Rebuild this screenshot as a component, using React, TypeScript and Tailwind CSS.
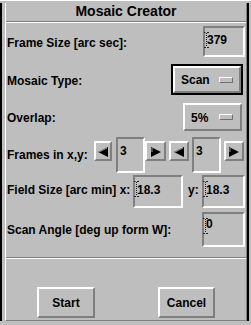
import React from "react";

const raised = "border-2 border-t-white border-l-white border-b-[#7f7f7f] border-r-[#7f7f7f]";
const sunken = "border-2 border-t-[#7f7f7f] border-l-[#7f7f7f] border-b-white border-r-white";

function Caret() {
  return (
    <svg width="5" height="16" viewBox="0 0 5 16" className="absolute left-[-1px] top-[4px]">
      <path d="M0 0.5h1.5M3 0.5h2M0 15.5h2M3 15.5h2" stroke="#222" strokeWidth="1" />
      <path d="M2.5 1v14" stroke="#222" strokeWidth="1" strokeDasharray="1 1" />
    </svg>
  );
}

function Field({ value, w, h, caret, pt = "pt-[5px]", extra = "" }: { value: string; w: string; h: string; caret?: boolean; pt?: string; extra?: string }) {
  return (
    <div className={`relative ${sunken} ${w} ${h} ${pt} pl-[1px] ${extra}`}>
      {caret && <Caret />}
      <span className="pl-[1px]">{value}</span>
    </div>
  );
}

function Indicator() {
  return <div className="w-[14px] h-[6px] border border-t-white border-l-white border-b-[#6f6f6f] border-r-[#6f6f6f]" />;
}

function Arrow({ dir, w }: { dir: "left" | "right"; w: string }) {
  return (
    <div className={`${raised} ${w} h-[20px] mt-[4px] flex items-center justify-center pt-[2px]`}>
      <svg width="10" height="10" viewBox="0 0 10 10">
        {dir === "left" ? (
          <>
            <polygon points="0,5 10,0 10,10" fill="#000" />
            <path d="M1 5L9 1" stroke="#9a9a9a" strokeWidth="1" />
          </>
        ) : (
          <>
            <polygon points="10,5 0,0 0,10" fill="#000" />
            <path d="M1 1L1 5" stroke="#9a9a9a" strokeWidth="1" />
          </>
        )}
      </svg>
    </div>
  );
}

export default function App() {
  return (
    <div className="w-[251px] h-[325px] bg-[#bebebe] border-t border-t-white flex flex-col font-['Liberation_Sans',Arial,sans-serif] font-bold text-[12px] leading-[14px] text-black">
      <div className="flex-1 mt-[2px] mb-[4px] mr-[2px] flex border-l-2 border-r-2 border-black">
        <div className="flex-1 ml-[3px] flex flex-col border-l border-l-white border-r border-r-[#7f7f7f] border-b border-b-[#7f7f7f]">
          <div className="h-[18px] text-center text-[14px] leading-[16px]">Mosaic Creator</div>
          <div className="h-[2px] border-t border-t-[#7f7f7f] border-b border-b-white" />

          <div className="mt-[3px] h-[31px] flex items-center pl-[1px] pr-[1px]">
            <span className="pt-[3px]">Frame Size [arc sec]:</span>
            <Field value="379" w="w-[42px]" h="h-[31px]" caret extra="ml-auto" />
          </div>

          <div className="mt-[7px] h-[31px] flex items-center pl-[1px] pr-[3px]">
            <span className="pt-[2px]">Mosaic Type:</span>
            <div className="ml-auto w-[72px] h-[31px] border-2 border-black">
              <div className={`${raised} h-full flex items-center justify-between pl-[6px] pr-[6px]`}>
                <span>Scan</span>
                <Indicator />
              </div>
            </div>
          </div>

          <div className="mt-[8px] h-[28px] flex items-center pl-[1px] pr-[4px]">
            <span className="pt-[2px]">Overlap:</span>
            <div className={`ml-auto w-[59px] h-[28px] ${raised} flex items-center justify-between pl-[6px] pr-[7px]`}>
              <span className="pt-[2px]">5%</span>
              <Indicator />
            </div>
          </div>

          <div className="mt-[6px] h-[36px] flex items-start pl-[1px]">
            <span className="w-[87px] self-center">Frames in x,y:</span>
            <Arrow dir="left" w="w-[18px]" />
            <Field value="3" w="w-[29px]" h="h-[36px]" extra="ml-[4px]" />
            <Arrow dir="right" w="w-[21px]" />
            <div className="ml-[3px]" />
            <Arrow dir="left" w="w-[20px]" />
            <Field value="3" w="w-[29px]" h="h-[36px]" extra="ml-[3px]" />
            <div className="ml-[3px]" />
            <Arrow dir="right" w="w-[20px]" />
          </div>

          <div className="mt-[2px] h-[33px] flex items-center pl-[1px] pr-[1px]">
            <span className="w-[126px] pb-[3px]">Field Size [arc min] x:</span>
            <Field value="18.3" w="w-[50px]" h="h-[33px]" caret pt="pt-[6px]" />
            <span className="ml-[5px] pb-[3px]">y:</span>
            <Field value="18.3" w="w-[43px]" h="h-[33px]" caret pt="pt-[6px]" extra="ml-auto" />
          </div>

          <div className="mt-[4px] h-[35px] flex items-center pl-[1px] pr-[1px]">
            <span>Scan Angle [deg up form W]:</span>
            <Field value="0" w="w-[43px]" h="h-[35px]" caret pt="pt-[3px]" extra="ml-auto" />
          </div>

          <div className="mt-[10px] h-[2px] border-t border-t-[#7f7f7f] border-b border-b-white" />

          <div className="mt-[28px] h-[31px] flex">
            <button className={`ml-[31px] w-[58px] h-[31px] ${raised} font-bold`}>Start</button>
            <button className={`ml-[63px] w-[57px] h-[31px] ${raised} font-bold`}>Cancel</button>
          </div>
        </div>
      </div>
    </div>
  );
}
